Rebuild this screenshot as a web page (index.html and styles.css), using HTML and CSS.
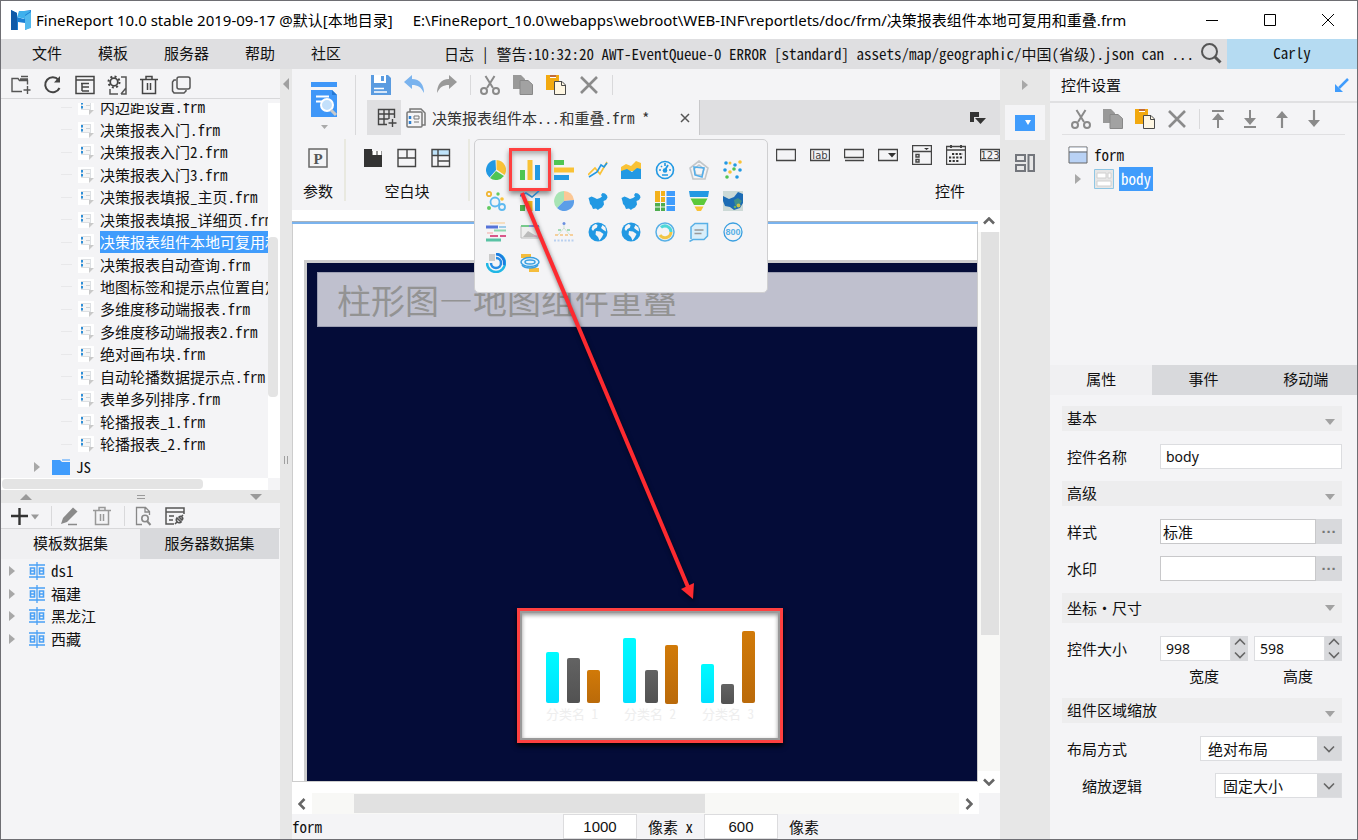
FILE: index.html
```html
<!DOCTYPE html>
<html lang="zh-CN">
<head>
  <meta charset="UTF-8" />
  <meta name="viewport" content="width=device-width, initial-scale=1.0" />
  <title>FineReport 10.0</title>
  <link rel="stylesheet" href="styles.css">
</head>
<body>

  <!-- Shared icons -->
  <svg class="defs" aria-hidden="true">
    <symbol id="i-frm" viewBox="0 0 16 18"><path d="M0 1h16v11l-5 5H0z" fill="#fff"/><rect x="3.500" y="3.500" width="9" height="8" fill="#f5f5f5" stroke="#dcdfe2"/><path d="M8 7.500h4" stroke="#cfd3d6"/><path d="M4 4v2.500M4 8v2.500" stroke="#2f8fd8" stroke-width="2"/><path d="M11 17v-5h5z" fill="#c9c9c9"/></symbol>
    <symbol id="i-right" viewBox="0 0 8 10"><path d="M1 0l6 5-6 5z" fill="#a8a8a8"/></symbol>
    <symbol id="i-down" viewBox="0 0 10 6"><path d="M0 0h10L5 6z" fill="#a2a2a2"/></symbol>
    <symbol id="i-ds" viewBox="0 0 18 18"><g fill="none" stroke="#4aa0f5" stroke-width="1.300"><path d="M1 3h16M1 15h16M9 0v18"/><path d="M2.500 6h4v6h-4zM11.500 6h4v6h-4zM2.500 9h4M11.500 9h4" stroke-width="1.600"/></g></symbol>
    <symbol id="i-cut" viewBox="0 0 20 20"><g fill="none" stroke="#8a8a8a" stroke-width="2"><path d="M5.500 1L13 13M14.500 1L7 13"/><circle cx="4" cy="16" r="3"/><circle cx="16" cy="16" r="3"/></g></symbol>
    <symbol id="i-copy" viewBox="0 0 20 20"><path d="M0 0h8l4 4v10H0z" fill="#999"/><path d="M7 5.500h8l4.500 4v10H7z" fill="#a2a2a2" stroke="#888"/></symbol>
    <symbol id="i-paste" viewBox="0 0 20 20"><path d="M0 0h13v15H0z" fill="#f2a90f"/><path d="M4 0h6v3H4z" fill="#fff"/><path d="M4 0h6v2H4z" fill="#c26a37"/><path d="M8.500 6.500H16l3.500 3.500v9.500h-11z" fill="#fff7e3" stroke="#4a4a4a"/><path d="M15.500 6.500v4h4" fill="none" stroke="#4a4a4a"/></symbol>
    <symbol id="i-del" viewBox="0 0 20 20"><path d="M2 2l16 16M18 2L2 18" stroke="#8b8b8b" stroke-width="2.600"/></symbol>
    <symbol id="i-trash" viewBox="0 0 20 20"><path d="M1 4.500h18M7 4V1.500h6V4M3.500 5v13.500h13V5M8.500 8v7M11.500 8v7" fill="none" stroke="currentColor" stroke-width="1.500"/></symbol>
    <symbol id="i-china" viewBox="0 0 20 20"><path d="M.5 7l3-1.500 2.500 1 3 1.500 3-1 2-1.500-1-1.500 1.500-2 2.500.5 2 2 .5 2-1.500 2.500-2.500 1 .5 3.500-2 3-3 1.500-1 1-2-1.500-3 .5-1.500-3.500L2 13l-.5-2.500z" fill="#2299e3"/></symbol>
    <symbol id="i-globe" viewBox="0 0 20 20"><circle cx="10" cy="10" r="9.500" fill="#2299e3"/><path d="M7.500 2l2 1-.5 2.500-2.500 1.500L5 9 3.500 7l1-3zM8 9l4 .5L15.500 12 14 15l-2.500 3.500L10 15l-2.500-2.500zM14.500 3l3 2.500.5 4-2.500-1.500L13 6z" fill="#f4f4f6"/></symbol>
    <symbol id="i-chev" viewBox="0 0 12 8"><path d="M1 1.500l5 5 5-5" fill="none" stroke="#666" stroke-width="1.600"/></symbol>
    <symbol id="i-bold-chev" viewBox="0 0 12 8"><path d="M1 1.500l5 5 5-5" fill="none" stroke="#666" stroke-width="2.600"/></symbol>
  </svg>

  <div class="window">
    <header class="titlebar">
      <svg class="logo" viewBox="0 0 20 20"><path d="M0 0l6 3v4l7 2V1l7-1v17l-6 3v-7l-7-1v8H0z" fill="#1a7fd4"/><path d="M0 0l6 3v17H0z" fill="#0f5aa8"/><path d="M8 1h12l-6 4v4L6 7z" fill="#3fb0ec"/><path d="M14 6l6-4v16l-6 2z" fill="#52b9ee"/></svg>
      <span class="app-name">FineReport 10.0 stable 2019-09-17 @默认[本地目录]</span>
      <span class="app-path">E:\FineReport_10.0\webapps\webroot\WEB-INF\reportlets/doc/frm/决策报表组件本地可复用和重叠.frm</span>
      <div class="window-buttons">
        <button aria-label="最小化"><svg viewBox="0 0 12 12"><path d="M0 6.500h12" stroke="#000"/></svg></button>
        <button aria-label="最大化"><svg viewBox="0 0 12 12"><path d="M.5.500h11v11H.5z" fill="none" stroke="#000"/></svg></button>
        <button aria-label="关闭"><svg viewBox="0 0 12 12"><path d="M0 0l12 12M12 0L0 12" stroke="#000"/></svg></button>
      </div>
    </header>

    <nav class="menubar">
      <button>文件</button>
      <button>模板</button>
      <button>服务器</button>
      <button>帮助</button>
      <button>社区</button>
      <span class="log">日志 | 警告:10:32:20 AWT-EventQueue-0 ERROR [standard] assets/map/geographic/中国(省级).json can ...</span>
      <button class="search" aria-label="搜索"><svg viewBox="0 0 22 22"><circle cx="9.500" cy="9.500" r="7.500" fill="none" stroke="#555" stroke-width="2"/><path d="M15 15l5.500 5.500" stroke="#555" stroke-width="3"/></svg></button>
      <button class="account">Carly</button>
    </nav>

    <main class="workspace">

      <!-- Left: template tree and datasets -->
      <aside class="left">
        <div class="toolbar files-toolbar">
          <button aria-label="新建目录"><svg viewBox="0 0 20 20"><path d="M11 16.500H1v-13h6l1.500 2h8v4M9 4h8M10 1.500h7M16.500 11v8M12.500 15h7" fill="none" stroke="#555" stroke-width="1.400"/></svg></button>
          <button aria-label="刷新"><svg viewBox="0 0 20 20"><path d="M16.500 13A7.500 7.500 0 1 1 15.500 5" fill="none" stroke="#444" stroke-width="2"/><path d="M17 1v6.500h-6z" fill="#444"/></svg></button>
          <button aria-label="展开"><svg viewBox="0 0 20 20"><path d="M1 1.500h18v17H1zM1 5h18M6 8.500h8M7 8v8M7 12h7M7 16h7" fill="none" stroke="#444" stroke-width="1.500"/></svg></button>
          <button aria-label="设置"><svg viewBox="0 0 20 20"><circle cx="7" cy="7" r="3.800" fill="none" stroke="#444" stroke-width="1.800"/><circle cx="7" cy="7" r="5.500" fill="none" stroke="#444" stroke-width="2" stroke-dasharray="2 2.300"/><path d="M14 2h5v17h-5M3 14v5h8M19 13l-5 6" fill="none" stroke="#555" stroke-width="1.500"/></svg></button>
          <button aria-label="删除"><svg viewBox="0 0 20 20"><use href="#i-trash"/></svg></button>
          <button aria-label="复制"><svg viewBox="0 0 20 20"><rect x="6" y="2" width="13" height="12" rx="2" fill="none" stroke="#555" stroke-width="1.500"/><path d="M5 5H3L1.500 7v9L3 18h10l2-2v-1" fill="none" stroke="#555" stroke-width="1.500"/></svg></button>
        </div>
        <div class="tree-area">
          <div class="tree-view">
            <ul class="tree">
              <li><svg><use href="#i-frm"/></svg><span>内边距设置.frm</span></li>
              <li><svg><use href="#i-frm"/></svg><span>决策报表入门.frm</span></li>
              <li><svg><use href="#i-frm"/></svg><span>决策报表入门2.frm</span></li>
              <li><svg><use href="#i-frm"/></svg><span>决策报表入门3.frm</span></li>
              <li><svg><use href="#i-frm"/></svg><span>决策报表填报_主页.frm</span></li>
              <li><svg><use href="#i-frm"/></svg><span>决策报表填报_详细页.frm</span></li>
              <li class="selected"><svg><use href="#i-frm"/></svg><span>决策报表组件本地可复用和重叠.frm</span></li>
              <li><svg><use href="#i-frm"/></svg><span>决策报表自动查询.frm</span></li>
              <li><svg><use href="#i-frm"/></svg><span>地图标签和提示点位置自定义.frm</span></li>
              <li><svg><use href="#i-frm"/></svg><span>多维度移动端报表.frm</span></li>
              <li><svg><use href="#i-frm"/></svg><span>多维度移动端报表2.frm</span></li>
              <li><svg><use href="#i-frm"/></svg><span>绝对画布块.frm</span></li>
              <li><svg><use href="#i-frm"/></svg><span>自动轮播数据提示点.frm</span></li>
              <li><svg><use href="#i-frm"/></svg><span>表单多列排序.frm</span></li>
              <li><svg><use href="#i-frm"/></svg><span>轮播报表_1.frm</span></li>
              <li><svg><use href="#i-frm"/></svg><span>轮播报表_2.frm</span></li>
              <li class="folder"><svg class="tri"><use href="#i-right"/></svg><svg class="folder-icon" viewBox="0 0 18 16"><path d="M0 1h8l2 2h8v13H0z" fill="#409cfc"/><path d="M10 1h8" stroke="#409cfc"/></svg><span>JS</span></li>
            </ul>
          </div>
          <div class="tree-vscroll"><div class="thumb"></div></div>
        </div>
        <div class="tree-hscroll"><div class="thumb"></div></div>
        <div class="pane-split">
          <svg viewBox="0 0 12 6"><path d="M0 6h12L6 0z" fill="#9a9a9a"/></svg>
          <svg viewBox="0 0 12 6"><path d="M2 1.500h8M2 4.500h8" stroke="#9a9a9a"/></svg>
          <svg viewBox="0 0 12 6"><path d="M0 0h12L6 6z" fill="#9a9a9a"/></svg>
        </div>
        <div class="toolbar data-toolbar">
          <button aria-label="添加" class="add"><svg viewBox="0 0 28 18"><path d="M0 9h17M8.500 1v17" stroke="#333" stroke-width="2.400"/><path d="M20 7.500h8l-4 5z" fill="#999"/></svg></button>
          <i class="sep"></i>
          <button aria-label="编辑"><svg viewBox="0 0 20 20"><path d="M1 18l2-6L13 1.500l4.500 4L7 16z" fill="#8a8a8a"/><path d="M8 18.500h9" stroke="#8a8a8a" stroke-width="1.500"/></svg></button>
          <button aria-label="删除" class="muted"><svg viewBox="0 0 20 20"><use href="#i-trash"/></svg></button>
          <i class="sep"></i>
          <button aria-label="预览"><svg viewBox="0 0 20 20"><path d="M9 18.500H3.500v-17h9l4 4V9M12 2v4h4" fill="none" stroke="#888" stroke-width="1.300"/><circle cx="12" cy="12.500" r="3.200" fill="none" stroke="#888" stroke-width="1.600"/><path d="M14 15l3.500 4" stroke="#888" stroke-width="2"/></svg></button>
          <button aria-label="连接"><svg viewBox="0 0 20 20"><path d="M9 18H1V2h18v6M1 6h18M4 10h5M4 14h4" fill="none" stroke="#555" stroke-width="1.500"/><path d="M10 18l2-2M18 9l-2 2M12 12l4 4c-3 2-6-1-4-4zM14 11c2-2 5 1 3 3z" fill="none" stroke="#555" stroke-width="1.600"/></svg></button>
        </div>
        <div class="tabs data-tabs">
          <button class="active">模板数据集</button>
          <button>服务器数据集</button>
        </div>
        <ul class="datasets">
          <li><svg class="tri"><use href="#i-right"/></svg><svg><use href="#i-ds"/></svg>ds1</li>
          <li><svg class="tri"><use href="#i-right"/></svg><svg><use href="#i-ds"/></svg>福建</li>
          <li><svg class="tri"><use href="#i-right"/></svg><svg><use href="#i-ds"/></svg>黑龙江</li>
          <li><svg class="tri"><use href="#i-right"/></svg><svg><use href="#i-ds"/></svg>西藏</li>
        </ul>
      </aside>

      <div class="side-split">
        <svg viewBox="0 0 8 12"><path d="M7 0v12L1 6z" fill="#a0a0a0"/></svg>
        <svg viewBox="0 0 8 12"><path d="M2.500 2v8M5.500 2v8" stroke="#a0a0a0"/></svg>
      </div>

      <!-- Center: toolbars and form canvas -->
      <section class="center">
        <div class="top">
          <button class="preview" aria-label="预览">
            <svg viewBox="0 0 28 48"><path d="M1 1h26v5H1zM1 9h21l5 5v22H1z" fill="#3f97f8"/><path d="M22 9l5 5h-5z" fill="#2578d4"/><path d="M6 15.500h13M6 20.500h8" stroke="#fff" stroke-width="2"/><circle cx="17" cy="24" r="6" fill="#c3e0fb" stroke="#fff" stroke-width="2"/><path d="M21 29l5 5" stroke="#c9c9c9" stroke-width="3"/><path d="M11 44h7l-3.500 4z" fill="#aaa"/></svg>
          </button>
          <div class="top-main">
            <div class="toolbar edit-toolbar">
              <button aria-label="保存"><svg viewBox="0 0 20 20"><path d="M0 0h17l3 3v17H0z" fill="#5a9be0"/><path d="M3 0h12v8H3z" fill="#fff"/><path d="M10 1h3v5h-3z" fill="#5a9be0"/><path d="M3 13.500h10M3 17h13" stroke="#fff" stroke-width="1.500"/></svg></button>
              <button aria-label="撤销"><svg viewBox="0 0 20 20"><path d="M0 7l8-7v4c8 0 12 6 12 14-3-6-6-8-12-8v4z" fill="#7ab3ee"/></svg></button>
              <button aria-label="重做"><svg viewBox="0 0 20 20"><path d="M20 7l-8-7v4C4 4 0 10 0 18c3-6 6-8 12-8v4z" fill="#999"/></svg></button>
              <i class="sep"></i>
              <button aria-label="剪切"><svg><use href="#i-cut"/></svg></button>
              <button aria-label="复制"><svg><use href="#i-copy"/></svg></button>
              <button aria-label="粘贴"><svg><use href="#i-paste"/></svg></button>
              <button aria-label="删除"><svg><use href="#i-del"/></svg></button>
              <i class="sep"></i>
            </div>
            <div class="doc-tabs">
              <button class="new-tab" aria-label="新建"><svg viewBox="0 0 20 20"><path d="M10 16.500H1.500v-15h16V10M1.500 6h16M1.500 11h10M7 1v15M12 1v10M15.500 11v8M11.500 15h8" fill="none" stroke="#444" stroke-width="1.400"/></svg></button>
              <div class="doc-tab">
                <svg viewBox="0 0 20 20"><path d="M4 4V1h11l4 4v12h-3" fill="none" stroke="#777" stroke-width="1.500"/><rect x="1" y="4" width="15" height="15" rx="1" fill="#f4f4f6" stroke="#777" stroke-width="1.500"/><path d="M8 8h5v3H8zM8 14h5" fill="none" stroke="#777"/><path d="M4 8v3M4 13v3" stroke="#2f7fd0" stroke-width="2.500"/></svg>
                <span>决策报表组件本...和重叠.frm *</span>
                <button aria-label="关闭标签"><svg viewBox="0 0 10 10"><path d="M1 1l8 8M9 1L1 9" stroke="#555" stroke-width="1.500"/></svg></button>
              </div>
              <button class="tab-list" aria-label="标签列表"><svg viewBox="0 0 16 14"><path d="M0 1h9v5H4v5H0z" fill="#333"/><path d="M5 7h11l-5.500 6z" fill="#333"/></svg></button>
            </div>
          </div>
        </div>

        <div class="ribbon">
          <div class="group params">
            <div class="icons"><button aria-label="参数"><svg viewBox="0 0 20 20"><rect x="1" y="1" width="18" height="18" fill="none" stroke="#666" stroke-width="1.500"/><text x="10" y="15.500" text-anchor="middle" class="p-glyph">P</text></svg></button></div>
            <span>参数</span>
          </div>
          <div class="group blocks">
            <div class="icons">
              <button aria-label="Tab块"><svg viewBox="0 0 20 20"><path d="M1 1h8v2h10v16H1z" fill="#333"/><path d="M9.500 3h4v4h-4zM14.500 3h4v4h-4z" fill="#fff"/></svg></button>
              <button aria-label="绝对画布块"><svg viewBox="0 0 20 20"><path d="M1 1.500h17.500v17H1zM1 10h17.500M10 1.500V10" fill="none" stroke="#444" stroke-width="1.400"/></svg></button>
              <button aria-label="报表块"><svg viewBox="0 0 20 20"><path d="M1 1.500h17.500v6H1z" fill="#bfe3fa"/><path d="M1 1.500h17.500v17H1zM1 7.500h17.500M7 1.500v17M7 13h11.500" fill="none" stroke="#444" stroke-width="1.400"/></svg></button>
            </div>
            <span>空白块</span>
          </div>
          <div class="group widgets">
            <div class="icons">
              <button aria-label="文本"><svg viewBox="0 0 20 20"><path d="M.5 4.500h19v11H.5z" fill="none" stroke="#444" stroke-width="1.400"/></svg></button>
              <button aria-label="标签"><svg viewBox="0 0 20 20"><path d="M.5 4.500h19v11H.5z" fill="none" stroke="#444" stroke-width="1.400"/><text x="10" y="14" text-anchor="middle" class="mini-text">lab</text></svg></button>
              <button aria-label="按钮"><svg viewBox="0 0 20 20"><path d="M.5 4.500h19v8H.5zM1 15.500h19" fill="none" stroke="#444" stroke-width="1.400"/></svg></button>
              <button aria-label="下拉框"><svg viewBox="0 0 20 20"><path d="M.5 4.500h19v11H.5z" fill="none" stroke="#444" stroke-width="1.400"/><path d="M10 8h8l-4 4.500z" fill="#333"/></svg></button>
              <button aria-label="复选框"><svg viewBox="0 0 20 20"><path d="M.5.500h19v19H.5zM.5 6.500h19M4 9.500h3v2.500H4zM4 14.500h3V17H4z" fill="none" stroke="#444" stroke-width="1.400"/><path d="M12 3h5l-2.500 2z" fill="#333"/></svg></button>
              <button aria-label="日期"><svg viewBox="0 0 20 20"><path d="M.5 1.500h19v18H.5zM.5 5h19" fill="none" stroke="#444" stroke-width="1.400"/><path d="M5 0v3M15 0v3" stroke="#444" stroke-width="2"/><path d="M6 9h11M3 12.500h14M3 16h10" stroke="#333" stroke-width="2.200" stroke-dasharray="2.200 1.400"/></svg></button>
              <button aria-label="数字"><svg viewBox="0 0 20 20"><path d="M.5 4.500h19v11H.5z" fill="none" stroke="#444" stroke-width="1.400"/><text x="10" y="14" text-anchor="middle" class="mini-text">123</text></svg></button>
            </div>
            <span>控件</span>
          </div>
        </div>

        <div class="canvas-row">
          <div class="canvas">
            <div class="ruler"></div>
            <div class="paper">
              <div class="form-body">
                <div class="form-title">柱形图—地图组件重叠</div>
                <div class="chart">
                  <svg viewBox="0 0 260 129">
                    <defs>
                      <linearGradient id="cyan" x2="0" y2="1"><stop stop-color="#00fbff"/><stop offset="1" stop-color="#00e0ff"/></linearGradient>
                      <linearGradient id="gray" x2="0" y2="1"><stop stop-color="#636363"/><stop offset="1" stop-color="#525252"/></linearGradient>
                      <linearGradient id="orange" x2="0" y2="1"><stop stop-color="#d17a08"/><stop offset="1" stop-color="#ba6a0a"/></linearGradient>
                    </defs>
                    <g fill="url(#cyan)"><rect x="26" y="41" width="13" height="51" rx="2"/><rect x="103" y="27" width="13" height="65" rx="2"/><rect x="181" y="53" width="13" height="39" rx="2"/></g>
                    <g fill="url(#gray)"><rect x="47" y="47" width="13" height="45" rx="2"/><rect x="125" y="59" width="13" height="33" rx="2"/><rect x="201" y="73" width="13" height="20" rx="2"/></g>
                    <g fill="url(#orange)"><rect x="67" y="59" width="13" height="33" rx="2"/><rect x="145" y="34" width="13" height="59" rx="2"/><rect x="222" y="20" width="13" height="72" rx="2"/></g>
                    <g class="axis" text-anchor="middle"><text x="52" y="108">分类名 1</text><text x="130" y="108">分类名 2</text><text x="208" y="108">分类名 3</text></g>
                  </svg>
                </div>
              </div>
            </div>
          </div>
          <div class="canvas-vscroll">
            <button class="up" aria-label="向上"><svg><use href="#i-bold-chev"/></svg></button>
            <div class="thumb"></div>
            <button aria-label="向下"><svg><use href="#i-bold-chev"/></svg></button>
          </div>
        </div>
        <div class="canvas-hscroll">
          <button class="prev" aria-label="向左"><svg><use href="#i-bold-chev"/></svg></button>
          <div class="track"><div class="thumb"></div></div>
          <button class="next" aria-label="向右"><svg><use href="#i-bold-chev"/></svg></button>
        </div>
        <footer class="status">
          <span class="status-name">form</span>
          <input type="text" value="1000" aria-label="宽" />
          <span>像素 x</span>
          <input type="text" value="600" aria-label="高" />
          <span>像素</span>
        </footer>

        <!-- Chart picker -->
        <div class="chart-popup">
          <button aria-label="饼图"><svg viewBox="0 0 20 20"><path d="M10 10L3.500 17.500A10 10 0 0 1 9.500 0z" fill="#2299e3"/><path d="M10.500 9.500V0A9.800 9.800 0 0 1 18.500 15z" fill="#f9c236"/><path d="M10 11l8 5A10 10 0 0 1 4 18z" fill="#4fc553"/></svg></button>
          <button aria-label="柱形图" class="picked"><svg viewBox="0 0 20 20"><path d="M0 10h5v10H0z" fill="#4fc553"/><path d="M7.500 0h5v20h-5z" fill="#f9c236"/><path d="M15 5h5v15h-5z" fill="#2299e3"/></svg></button>
          <button aria-label="条形图"><svg viewBox="0 0 20 20"><path d="M0 0h10v5H0z" fill="#4fc553"/><path d="M0 7.500h20v5H0z" fill="#f9c236"/><path d="M0 15h15v5H0z" fill="#2299e3"/></svg></button>
          <button aria-label="折线图"><svg viewBox="0 0 20 20"><path d="M0 15l7-7 5 6 7-12" fill="none" stroke="#f9c236" stroke-width="1.600"/><path d="M1 17l8-5 4-7 3 2 3-4" fill="none" stroke="#2299e3" stroke-width="1.600"/></svg></button>
          <button aria-label="面积图"><svg viewBox="0 0 20 20"><path d="M0 7l5-3 5 2 5-5 5 2v8H0z" fill="#f9c236"/><path d="M0 11l6-2 5 3 5-4 4 1v10H0z" fill="#2299e3"/></svg></button>
          <button aria-label="仪表盘"><svg viewBox="0 0 20 20"><circle cx="10" cy="10" r="8.500" fill="none" stroke="#2299e3" stroke-width="1.600"/><path d="M4 10h2M14 10h2M10 3v3M6 6l1 1M7 15h6" stroke="#2299e3" stroke-width="1.600"/><circle cx="10" cy="10.500" r="2.300" fill="#2299e3"/><path d="M10 10l3-5" stroke="#2299e3" stroke-width="1.800"/></svg></button>
          <button aria-label="雷达图"><svg viewBox="0 0 20 20"><path d="M10 1l9 7-3 11H4L1 8zM10 5l5 4-2 6H7L5 9z" fill="none" stroke="#c3c7ca" stroke-width="1.600"/><path d="M5 7l10 1-2 9-7-2z" fill="none" stroke="#53aeea" stroke-width="1.600"/></svg></button>
          <button aria-label="散点图"><svg viewBox="0 0 20 20"><g fill="#2299e3"><circle cx="3" cy="3" r="1.800"/><circle cx="12" cy="5" r="1.800"/><circle cx="2" cy="10" r="1.800"/><circle cx="17" cy="10" r="1.800"/><circle cx="14" cy="17" r="1.800"/></g><g fill="#f9c236"><circle cx="17" cy="2" r="1.800"/><circle cx="7" cy="12" r="1.800"/><circle cx="7" cy="3" r="1.500"/></g><g fill="#4fc553"><circle cx="11" cy="9" r="1.800"/><circle cx="4" cy="17" r="1.800"/></g></svg></button>

          <button aria-label="气泡图"><svg viewBox="0 0 20 20"><g fill="none" stroke-width="1.800"><circle cx="9" cy="11" r="4.500" stroke="#5eb9f0"/><circle cx="16" cy="16" r="3" stroke="#5eb9f0"/><circle cx="3" cy="3" r="2.200" stroke="#f0b634"/></g><g fill="#62ca62"><circle cx="12" cy="3" r="1.700"/><circle cx="3" cy="17" r="2"/></g><circle cx="16" cy="8" r="1.800" fill="#f9c236"/></svg></button>
          <button aria-label="组合图"><svg viewBox="0 0 20 20"><path d="M0 14h5v6H0z" fill="#4fb04f"/><path d="M7.500 10h5v10h-5z" fill="#f3b41c"/><path d="M15 7h5v13h-5z" fill="#2299e3"/><path d="M0 5l6-3 6 4 7-6" fill="none" stroke="#2c82c4" stroke-width="1.600"/></svg></button>
          <button aria-label="多层饼图"><svg viewBox="0 0 20 20"><path d="M10 10L3 17A10 10 0 0 1 10 0z" fill="#a7e4b4"/><path d="M10 10V0a10 10 0 0 1 10 9z" fill="#fbc795"/><path d="M10 10l10-1A10 10 0 0 1 3 17z" fill="#5b9ee8"/></svg></button>
          <button aria-label="地图"><svg><use href="#i-china"/></svg></button>
          <button aria-label="钻取地图"><svg><use href="#i-china"/></svg></button>
          <button aria-label="矩形树图"><svg viewBox="0 0 20 20"><path d="M0 0h5v11H0zM6 0h4v5H6zM6 6h4v5H6z" fill="#f3b11c"/><path d="M0 12h5v3.500H0zM6 12h4v3.500H6zM0 16.500h5V20H0zM6 16.500h4V20H6z" fill="#4fad4f"/><path d="M11.500 0H20v5h-8.500zM11.500 6H20v8h-8.500zM11.500 15H20v5h-8.500z" fill="#409cfc"/></svg></button>
          <button aria-label="漏斗图"><svg viewBox="0 0 20 20"><path d="M0 0h20l-1 6H1z" fill="#2299e3"/><path d="M1.500 7.500h17L15 14H5z" fill="#5cc93a"/><path d="M5.500 15.500h9L12 20H8z" fill="#f9c236"/></svg></button>
          <button aria-label="GIS地图"><svg viewBox="0 0 20 20"><path d="M0 0h20v20H0z" fill="#ccd9d6"/><path d="M0 5l6 3 5-2 4-5 5 2v9l-3 5-6 2-4-3-5-1-2-5z" fill="#1c6bb4"/><path d="M11 9l4-2 4 3-3 5-4-1z" fill="#3f8f8a"/><circle cx="15.500" cy="14.500" r="2" fill="#c8c04a"/><circle cx="12" cy="16" r="1.300" fill="#6bb35a"/></svg></button>

          <button aria-label="词云"><svg viewBox="0 0 20 20"><path d="M4 1h15" stroke="#f7c98c"/><path d="M0 5h12" stroke="#5673d8" stroke-width="3"/><path d="M13 5h7" stroke="#4aa3dc"/><path d="M8 8.500h12" stroke="#8fd9b0" stroke-width="2"/><path d="M1 11h6" stroke="#f5a7a0"/><path d="M4 14h8M14 14h6" stroke="#d9588a" stroke-width="2"/><path d="M0 18h15" stroke="#59c2a4" stroke-width="3"/></svg></button>
          <button aria-label="甘特图"><svg viewBox="0 0 20 20"><path d="M1 4h18v12H1z" fill="#eee" stroke="#bbb"/><path d="M1 4h8" stroke="#77c98c" stroke-width="2"/><path d="M9 4h10" stroke="#8295dc" stroke-width="2"/><path d="M3 15l5-6 10 6z" fill="#bbb"/><path d="M13 14h5" stroke="#e2a5c5"/></svg></button>
          <button aria-label="结构图"><svg viewBox="0 0 20 20"><circle cx="10" cy="1.500" r="1.500" fill="#6b8fe0"/><path d="M10 3v3M10 6L4 13M10 6l6 7" fill="none" stroke="#cfe3d4"/><path d="M4 8h3M13 8h3" stroke="#a5dbb6" stroke-width="2"/><path d="M1 13h18" stroke="#f5cf9b" stroke-width="2" stroke-dasharray="3 2"/><path d="M0 18.500h20" stroke="#b9d0ef" stroke-width="2" stroke-dasharray="2 1.500"/></svg></button>
          <button aria-label="点地图"><svg><use href="#i-globe"/></svg></button>
          <button aria-label="流向地图"><svg><use href="#i-globe"/></svg></button>
          <button aria-label="轮播"><svg viewBox="0 0 20 20"><circle cx="10" cy="10" r="9" fill="none" stroke="#58b0e6" stroke-width="1.500"/><path d="M6 5.500a6 6 0 0 1 10 4.500" fill="none" stroke="#4cd8d8" stroke-width="3"/><path d="M16 10a6 6 0 0 1-11 3" fill="none" stroke="#f0c645" stroke-width="3"/></svg></button>
          <button aria-label="标注"><svg viewBox="0 0 20 20"><path d="M2 17V5l4-3.500h12.500V14L15 17.500H4L.5 19.500" fill="#d9eefa" stroke="#58b0e6" stroke-width="1.500"/><path d="M5.500 8h9M5.500 11.500h7" stroke="#999" stroke-width="1.600"/></svg></button>
          <button aria-label="计数器"><svg viewBox="0 0 20 20"><circle cx="10" cy="10" r="9" fill="none" stroke="#3a9fe0" stroke-width="1.300"/><text x="10" y="13" text-anchor="middle" class="count-text">800</text></svg></button>

          <button aria-label="环形图"><svg viewBox="0 0 20 20"><path d="M10 1a9 9 0 1 1-9 9" fill="none" stroke="#20b7e5" stroke-width="2.500"/><path d="M10 1a9 9 0 0 1 8 11" fill="none" stroke="#1c7be0" stroke-width="2.500"/><path d="M10 5a5 5 0 1 1-5 5" fill="none" stroke="#268de5" stroke-width="2.500"/><path d="M3 1h6v7H3z" fill="#cbcbcb"/></svg></button>
          <button aria-label="3D"><svg viewBox="0 0 20 20"><path d="M1 1h10v4H1zM9 15h10v4H9z" fill="#f5bd3c"/><ellipse cx="10" cy="9" rx="9" ry="4.500" fill="#e6f4fd" stroke="#3a9fe0" stroke-width="1.500"/><ellipse cx="10" cy="9" rx="5" ry="2" fill="none" stroke="#3a9fe0" stroke-width="1.500"/><path d="M2 12c3 4 13 4 16 0" fill="none" stroke="#3a9fe0" stroke-width="1.500"/></svg></button>
        </div>
        <svg class="callout" viewBox="0 0 190 420"><path d="M10 4L176 398" stroke="#fd2a30" stroke-width="4"/><path d="M169 400l13-6-1 16z" fill="#fd2a30"/></svg>
      </section>

      <nav class="dock">
        <button class="collapse" aria-label="收起"><svg><use href="#i-right"/></svg></button>
        <button class="active" aria-label="控件设置"><svg viewBox="0 0 20 16"><path d="M0 0h20v16H0z" fill="#409cfc"/><path d="M10 5h6l-3 5z" fill="#fff"/></svg></button>
        <button aria-label="组件库"><svg viewBox="0 0 20 18"><path d="M1 1h9v6H1zM1 11h9v6H1zM13.500 1H19v16h-5.500z" fill="none" stroke="#73767c" stroke-width="2"/></svg></button>
      </nav>

      <!-- Right: widget settings -->
      <aside class="right">
        <div class="panel-title">
          <span>控件设置</span>
          <button aria-label="弹出"><svg viewBox="0 0 14 14"><path d="M13 1L4 10" stroke="#409cfc" stroke-width="2.500"/><path d="M0 6v8h8z" fill="#409cfc"/></svg></button>
        </div>
        <div class="toolbar widget-toolbar">
          <button aria-label="剪切"><svg><use href="#i-cut"/></svg></button>
          <button aria-label="复制"><svg><use href="#i-copy"/></svg></button>
          <button aria-label="粘贴"><svg><use href="#i-paste"/></svg></button>
          <button aria-label="删除"><svg><use href="#i-del"/></svg></button>
          <i class="sep"></i>
          <button aria-label="置顶"><svg viewBox="0 0 20 20"><path d="M4 2h12M10 6v13" stroke="#8a8a8a" stroke-width="2"/><path d="M4 11l6-7 6 7z" fill="#8a8a8a"/></svg></button>
          <button aria-label="置底"><svg viewBox="0 0 20 20"><path d="M4 18h12M10 1v13" stroke="#8a8a8a" stroke-width="2"/><path d="M4 9l6 7 6-7z" fill="#8a8a8a"/></svg></button>
          <button aria-label="上移"><svg viewBox="0 0 20 20"><path d="M10 4v15" stroke="#8a8a8a" stroke-width="2.200"/><path d="M4 9l6-7 6 7z" fill="#8a8a8a"/></svg></button>
          <button aria-label="下移"><svg viewBox="0 0 20 20"><path d="M10 1v15" stroke="#8a8a8a" stroke-width="2.200"/><path d="M4 11l6 7 6-7z" fill="#8a8a8a"/></svg></button>
        </div>
        <ul class="widget-tree">
          <li><svg viewBox="0 0 20 18"><path d="M1 1h18v16H1z" fill="#b9d2f5" stroke="#666"/><path d="M1.500 1.500h17v4h-17z" fill="#fff"/><path d="M1 6h18" stroke="#666"/></svg><span>form</span></li>
          <li class="child selected"><svg class="tri"><use href="#i-right"/></svg><svg viewBox="0 0 20 20"><path d="M.5.500h19v19H.5z" fill="#e6e6e6" stroke="#8ec6e4"/><path d="M3 4h9v5H3zM14 4h3v5h-3zM3 12h14v5H3z" fill="#fff" stroke="#d0d0d0"/></svg><span>body</span></li>
        </ul>

        <div class="tabs prop-tabs">
          <button class="active">属性</button>
          <button>事件</button>
          <button>移动端</button>
        </div>
        <form class="props">
          <h3>基本<svg><use href="#i-down"/></svg></h3>
          <div class="field">
            <label for="widgetName">控件名称</label>
            <input type="text" id="widgetName" class="latin" value="body" />
          </div>
          <h3>高级<svg><use href="#i-down"/></svg></h3>
          <div class="field">
            <label for="widgetStyle">样式</label>
            <div class="picker"><input type="text" id="widgetStyle" value="标准" /><button type="button" aria-label="选择样式">···</button></div>
          </div>
          <div class="field">
            <label for="watermark">水印</label>
            <div class="picker"><input type="text" id="watermark" /><button type="button" aria-label="选择水印">···</button></div>
          </div>
          <h3 class="tall">坐标·尺寸<svg><use href="#i-down"/></svg></h3>
          <div class="field size-field">
            <span>控件大小</span>
            <div class="size">
              <div class="spinner"><input type="text" id="w" class="latin" value="998" /><div><svg class="flip"><use href="#i-chev"/></svg><svg><use href="#i-chev"/></svg></div></div>
              <label for="w">宽度</label>
            </div>
            <div class="size">
              <div class="spinner"><input type="text" id="h" class="latin" value="598" /><div><svg class="flip"><use href="#i-chev"/></svg><svg><use href="#i-chev"/></svg></div></div>
              <label for="h">高度</label>
            </div>
          </div>
          <h3>组件区域缩放<svg><use href="#i-down"/></svg></h3>
          <div class="field">
            <label for="layout">布局方式</label>
            <div class="combo"><select id="layout"><option>绝对布局</option></select><svg><use href="#i-chev"/></svg></div>
          </div>
          <div class="field indent">
            <label for="scale">缩放逻辑</label>
            <div class="combo"><select id="scale"><option>固定大小</option></select><svg><use href="#i-chev"/></svg></div>
          </div>
        </form>
      </aside>
    </main>
  </div>

</body>
</html>
```
FILE: styles.css
```css
* {
  box-sizing: border-box;
  margin: 0;
  padding: 0;
}

body {
  font-family: 'Noto Sans CJK SC', sans-serif;
  font-size: 15px;
  line-height: 20px;
  color: #111;
  font-feature-settings: "hwid";
}

button,
input,
select {
  font: inherit;
  font-feature-settings: inherit;
  color: inherit;
  border: none;
  border-radius: 0;
  background: none;
}

button {
  display: flex;
  align-items: center;
  justify-content: center;
}

svg {
  display: block;
  flex: none;
}

ul {
  list-style: none;
}

.defs {
  position: absolute;
  width: 0;
  height: 0;
}

.window {
  height: 100vh;
  display: flex;
  flex-direction: column;
  border: 1px solid #6e6e73;
  background: #f4f4f6;
  overflow: hidden;
}

/* Title bar */
.titlebar {
  height: 38px;
  flex: none;
  display: flex;
  align-items: center;
  padding-left: 10px;
  background: #fff;
  color: #000;
  font-family: 'Noto Sans', 'Noto Sans CJK SC', sans-serif;
  font-feature-settings: normal;
  white-space: nowrap;
}

.logo {
  width: 20px;
  height: 20px;
  margin-right: 5px;
}

.app-path {
  margin-left: 20px;
}

.window-buttons {
  display: flex;
  margin-left: auto;
}

.window-buttons button {
  width: 58px;
  height: 38px;
}

.window-buttons svg {
  width: 12px;
  height: 12px;
}

/* Menu bar */
.menubar {
  height: 30px;
  flex: none;
  display: flex;
  align-items: center;
  padding-left: 31px;
  background: #dfdfe1;
  white-space: nowrap;
}

.menubar button {
  margin-right: 36px;
  padding-bottom: 2px;
}

.menubar .log {
  margin-left: auto;
}

.menubar .search {
  margin: 0 5px 0 6px;
}

.search svg {
  width: 22px;
  height: 22px;
}

.menubar .account {
  width: 130px;
  height: 30px;
  margin: 0;
  background: #b5dbf2;
}

.workspace {
  flex: 1;
  min-height: 0;
  display: flex;
}

.toolbar {
  display: flex;
  align-items: center;
}

.toolbar svg {
  width: 20px;
  height: 20px;
}

.sep {
  width: 1px;
  height: 20px;
  margin-right: -4px;
  background: #d9d9db;
}

.tabs {
  display: flex;
}

.tabs button {
  flex: 1;
  height: 30px;
  padding-bottom: 2px;
  background: #d8d9dc;
}

.tabs .active {
  background: #f0f0f2;
}

/* Left panel */
.left {
  width: 279px;
  flex: none;
  display: flex;
  flex-direction: column;
}

.files-toolbar {
  height: 30px;
  flex: none;
  gap: 12px;
  padding: 3px 0 0 10px;
  border-bottom: 1px solid #d8d8da;
  color: #444;
}

.tree-area {
  height: 379px;
  flex: none;
  display: flex;
  padding-top: 4px;
}

.tree-view {
  flex: 1;
  min-width: 0;
  display: flex;
  align-items: flex-end;
  overflow: hidden;
}

.tree {
  width: 100%;
  height: 382px;
  flex: none;
  display: flex;
  flex-direction: column;
}

.tree li {
  flex: 1;
  display: flex;
  align-items: center;
  padding-left: 60px;
  white-space: nowrap;
}

.tree li::before {
  content: "";
  width: 11px;
  height: 1px;
  margin-right: 6px;
  background: #e8e8ea;
}

.tree svg {
  width: 16px;
  height: 18px;
  margin-right: 6px;
}

.tree span {
  flex: 1;
  overflow: hidden;
  line-height: 22px;
}

.tree .selected span {
  background: #409cfc;
  color: #fff;
}

.tree .folder {
  padding-left: 32px;
}

.tree .folder::before {
  display: none;
}

.tree .tri {
  width: 8px;
  height: 10px;
  margin-right: 11px;
}

.tree .folder-icon {
  width: 18px;
  height: 16px;
}

.tree-vscroll {
  width: 12px;
  padding-top: 134px;
  background: #fff;
}

.tree-vscroll .thumb {
  width: 10px;
  height: 160px;
  border-radius: 4px;
  background: #e4e4e4;
}

.tree-hscroll {
  height: 12px;
  flex: none;
  margin-right: 12px;
  padding: 1px;
  background: #fff;
}

.tree-hscroll .thumb {
  width: 76%;
  height: 10px;
  border-radius: 4px;
  background: #e4e4e4;
}

.pane-split {
  height: 13px;
  flex: none;
  display: flex;
  align-items: center;
  justify-content: space-between;
  padding: 0 18px 0 19px;
  background: #e7e7e7;
}

.pane-split svg {
  width: 12px;
  height: 6px;
}

.data-toolbar {
  height: 26px;
  flex: none;
  gap: 12px;
  padding-left: 10px;
  border-bottom: 1px solid #d8d8da;
}

.data-toolbar .add svg {
  width: 28px;
  height: 18px;
}

.data-toolbar .muted {
  color: #999;
}

.data-tabs {
  margin-right: 1px;
}

.datasets {
  height: 90px;
  display: flex;
  flex-direction: column;
  margin-top: 1px;
  padding-left: 7px;
}

.datasets li {
  flex: 1;
  display: flex;
  align-items: center;
}

.datasets svg {
  width: 18px;
  height: 18px;
  margin-right: 5px;
}

.datasets .tri {
  width: 8px;
  height: 10px;
  margin-right: 12px;
}

.side-split {
  width: 12px;
  flex: none;
  display: flex;
  flex-direction: column;
  align-items: center;
  gap: 364px;
  padding-top: 9px;
  background: #e7e7e7;
}

.side-split svg {
  width: 8px;
  height: 12px;
}

/* Center */
.center {
  flex: 1;
  min-width: 0;
  display: flex;
  flex-direction: column;
  position: relative;
}

.top {
  display: flex;
}

.preview {
  width: 64px;
  height: 60px;
  margin: 6px 11px 0 0;
  border-right: 1px solid #d9d9db;
}

.preview svg {
  width: 28px;
  height: 48px;
}

.top-main {
  flex: 1;
  min-width: 0;
}

.edit-toolbar {
  height: 31px;
  gap: 13px;
  padding-left: 4px;
}

.doc-tabs {
  height: 35px;
  display: flex;
  background: #dfdfe1;
}

.new-tab {
  width: 34px;
  padding-left: 6px;
}

.new-tab svg,
.doc-tab > svg {
  width: 20px;
  height: 20px;
}

.doc-tab {
  width: 299px;
  display: flex;
  align-items: center;
  gap: 6px;
  padding: 0 9px 0 5px;
  border-right: 1px solid #c8c8ca;
  background: #f4f4f6;
  color: #333;
}

.doc-tab button {
  margin-left: auto;
}

.doc-tab button svg {
  width: 10px;
  height: 10px;
}

.tab-list {
  margin-left: auto;
  padding-right: 14px;
}

.tab-list svg {
  width: 16px;
  height: 14px;
}

.ribbon {
  height: 75px;
  flex: none;
  display: flex;
  justify-content: space-between;
  padding: 4px 0 0;
}

.group {
  height: 62px;
  display: flex;
  flex-direction: column;
  align-items: center;
  justify-content: space-between;
}

.icons {
  display: flex;
  gap: 14px;
  padding-top: 9px;
}

.icons svg {
  width: 20px;
  height: 20px;
}

.params {
  width: 54px;
  border-right: 2px solid #e9e9e0;
}

.blocks {
  width: 124px;
  margin-right: auto;
  border-right: 2px solid #e9e9e0;
}

.widgets {
  width: 224px;
  align-items: flex-end;
}

.widgets .icons {
  padding-top: 6px;
}

.widgets > span {
  padding-right: 35px;
}

.p-glyph {
  font: bold 15px 'Liberation Serif', serif;
  fill: #555;
}

.mini-text {
  font: 10px 'DejaVu Sans', sans-serif;
  fill: #444;
}

.count-text {
  font: bold 9px 'Liberation Sans', sans-serif;
  fill: #58b0e6;
}

.canvas-row {
  flex: 1;
  min-height: 0;
  display: flex;
}

.canvas {
  flex: 1;
  min-width: 0;
  display: flex;
  flex-direction: column;
  padding: 11px 0 11px;
  background: #fff;
}

.ruler {
  height: 3px;
  flex: none;
  border-top: 1px solid #a9b2bb;
  background: #7ab3ee;
}

.paper {
  flex: 1;
  display: flex;
  padding: 36px 0 0 11px;
  border: solid #cdcdcd;
  border-width: 0 1px 1px;
}

.form-body {
  flex: 1;
  position: relative;
  padding: 9px 0 0 10px;
  border: solid #cdcdcd;
  border-width: 3px 0 0 3px;
  background: #040c38;
}

.form-title {
  height: 55px;
  padding-left: 19px;
  border: 1px solid #9c9fb2;
  border-right: none;
  background: #bfc0ce;
  color: #939393;
  font-size: 34px;
  font-feature-settings: normal;
  line-height: 54px;
}

.chart {
  position: absolute;
  left: 210px;
  top: 345px;
  width: 266px;
  height: 135px;
  border: 3px solid #ff4040;
  background: #fff;
  box-shadow: inset 0 0 0 2px #999, inset 0 2px 4px 2px #999, 0 3px 5px #000;
}

.chart svg {
  width: 260px;
  height: 129px;
}

.axis {
  font-size: 13px;
  fill: #eeeeee;
}

.canvas-vscroll {
  width: 22px;
  flex: none;
  display: flex;
  flex-direction: column;
  background: #f8f8f6;
}

.canvas-vscroll button {
  height: 22px;
  background: #fff;
}

.canvas-vscroll .thumb {
  height: 403px;
  margin: 0 1px 0 3px;
  margin-bottom: auto;
  background: #e1e1e1;
}

.canvas-vscroll svg,
.canvas-hscroll svg {
  width: 12px;
  height: 8px;
}

.up svg,
.flip {
  transform: rotate(180deg);
}

.canvas-hscroll {
  height: 21px;
  flex: none;
  display: flex;
  margin-right: 21px;
}

.canvas-hscroll button {
  width: 20px;
  background: #fff;
}

.prev svg {
  transform: rotate(90deg);
}

.next svg {
  transform: rotate(-90deg);
}

.track {
  flex: 1;
  padding: 1px 0 1px 42px;
  background: #f8f8f6;
}

.track .thumb {
  width: 58%;
  height: 19px;
  background: #e1e1e1;
}

.status {
  height: 25px;
  flex: none;
  display: flex;
  align-items: center;
  gap: 11px;
}

.status-name {
  width: 260px;
}

.status input {
  width: 74px;
  height: 25px;
  border: 1px solid #dcdcde;
  background: #fff;
  font-family: 'Liberation Sans', sans-serif;
  text-align: center;
}

.chart-popup {
  position: absolute;
  left: 182px;
  top: 70px;
  width: 294px;
  height: 154px;
  display: grid;
  grid-template-columns: repeat(8, 20px);
  grid-auto-rows: 20px;
  align-content: start;
  justify-content: space-between;
  row-gap: 11px;
  padding: 20px 24px 0 11px;
  border: 1px solid #cfcfd1;
  border-radius: 5px;
  background: #f4f4f6;
}

.chart-popup button {
  position: relative;
}

.chart-popup svg {
  width: 20px;
  height: 20px;
}

.chart-popup .picked::after {
  content: "";
  position: absolute;
  inset: -12px -11px -11px;
  border: 3px solid #ff4040;
  box-shadow: 0 3px 5px #888, inset 0 3px 5px #aaa;
}

.callout {
  position: absolute;
  left: 220px;
  top: 120px;
  width: 190px;
  height: 420px;
  filter: drop-shadow(1px 3px 2px rgba(0, 0, 0, 0.5));
  pointer-events: none;
}

/* Dock strip */
.dock {
  width: 50px;
  flex: none;
  display: flex;
  flex-direction: column;
  align-items: center;
  gap: 5px;
  background: #e7e7e7;
}

.dock button {
  width: 40px;
  height: 35px;
}

.dock .collapse {
  height: 31px;
}

.dock .active {
  background: #f4f4f6;
}

.dock svg {
  width: 20px;
  height: 18px;
}

.dock .collapse svg {
  width: 8px;
  height: 12px;
}

/* Right panel */
.right {
  width: 307px;
  flex: none;
}

.panel-title {
  height: 34px;
  display: flex;
  align-items: center;
  justify-content: space-between;
  padding: 0 8px 0 11px;
  border-bottom: 2px solid #e0e0e2;
}

.panel-title svg {
  width: 14px;
  height: 14px;
}

.widget-toolbar {
  height: 32px;
  gap: 12px;
  margin: 0 12px;
  padding-left: 9px;
  border-bottom: 1px solid #e0e0e2;
}

.widget-tree {
  height: 230px;
  padding: 8px 18px;
}

.widget-tree li {
  height: 24px;
  display: flex;
  align-items: center;
  gap: 6px;
}

.widget-tree svg {
  width: 20px;
  height: 20px;
}

.widget-tree .tri {
  width: 8px;
  height: 10px;
  margin-right: 6px;
}

.widget-tree .child {
  padding-left: 6px;
}

.widget-tree .selected span {
  margin-left: -1px;
  padding: 2px;
  background: #409cfc;
  color: #fff;
}

.props {
  padding: 11px 15px 0 12px;
}

.props h3 {
  display: flex;
  align-items: center;
  justify-content: space-between;
  height: 25px;
  margin-bottom: 13px;
  padding: 0 7px 2px 5px;
  background: #ededee;
  font-size: 15px;
  font-weight: normal;
}

.props h3 svg {
  width: 10px;
  height: 6px;
  margin-top: 8px;
}

.props .tall {
  height: 30px;
  padding-bottom: 0;
}

.props .tall svg {
  margin-top: 0;
}

.field {
  display: flex;
  align-items: center;
  height: 25px;
  margin-bottom: 12px;
  padding-left: 5px;
}

.field > label,
.field > span {
  width: 93px;
  flex: none;
}

.field input {
  flex: 1;
  min-width: 0;
  height: 25px;
  padding-left: 5px;
  border: 1px solid #dcdde0;
  background: #fff;
}

.field .latin {
  font-family: 'Noto Sans', sans-serif;
  font-size: 14px;
  font-feature-settings: normal;
}

.picker {
  flex: 1;
  display: flex;
}

.picker input {
  padding-left: 2px;
  border-color: #c8c8ca;
}

.picker button {
  width: 26px;
  background: #d8d9dc;
  color: #777;
  font-family: 'Liberation Sans', sans-serif;
  font-weight: bold;
}

.size-field {
  height: 50px;
  align-items: flex-start;
  gap: 6px;
}

.size-field > span {
  width: 87px;
  line-height: 25px;
}

.size {
  flex: 1;
  min-width: 0;
  text-align: center;
}

.size label {
  display: block;
  line-height: 30px;
}

.spinner {
  display: flex;
}

.spinner > div {
  width: 17px;
  flex: none;
  display: flex;
  flex-direction: column;
  align-items: center;
  justify-content: space-around;
  background: #d8d9dc;
}

.spinner svg,
.combo svg {
  width: 12px;
  height: 8px;
}

.combo {
  flex: 1;
  height: 25px;
  display: flex;
  align-items: center;
  margin-left: 40px;
  padding-right: 6px;
  border: 1px solid #dcdde0;
  background: #d8d9dc;
}

.combo select {
  flex: 1;
  height: 23px;
  margin-right: 6px;
  padding-left: 7px;
  appearance: none;
  background: #fff;
}

.indent {
  padding-left: 20px;
}
```
